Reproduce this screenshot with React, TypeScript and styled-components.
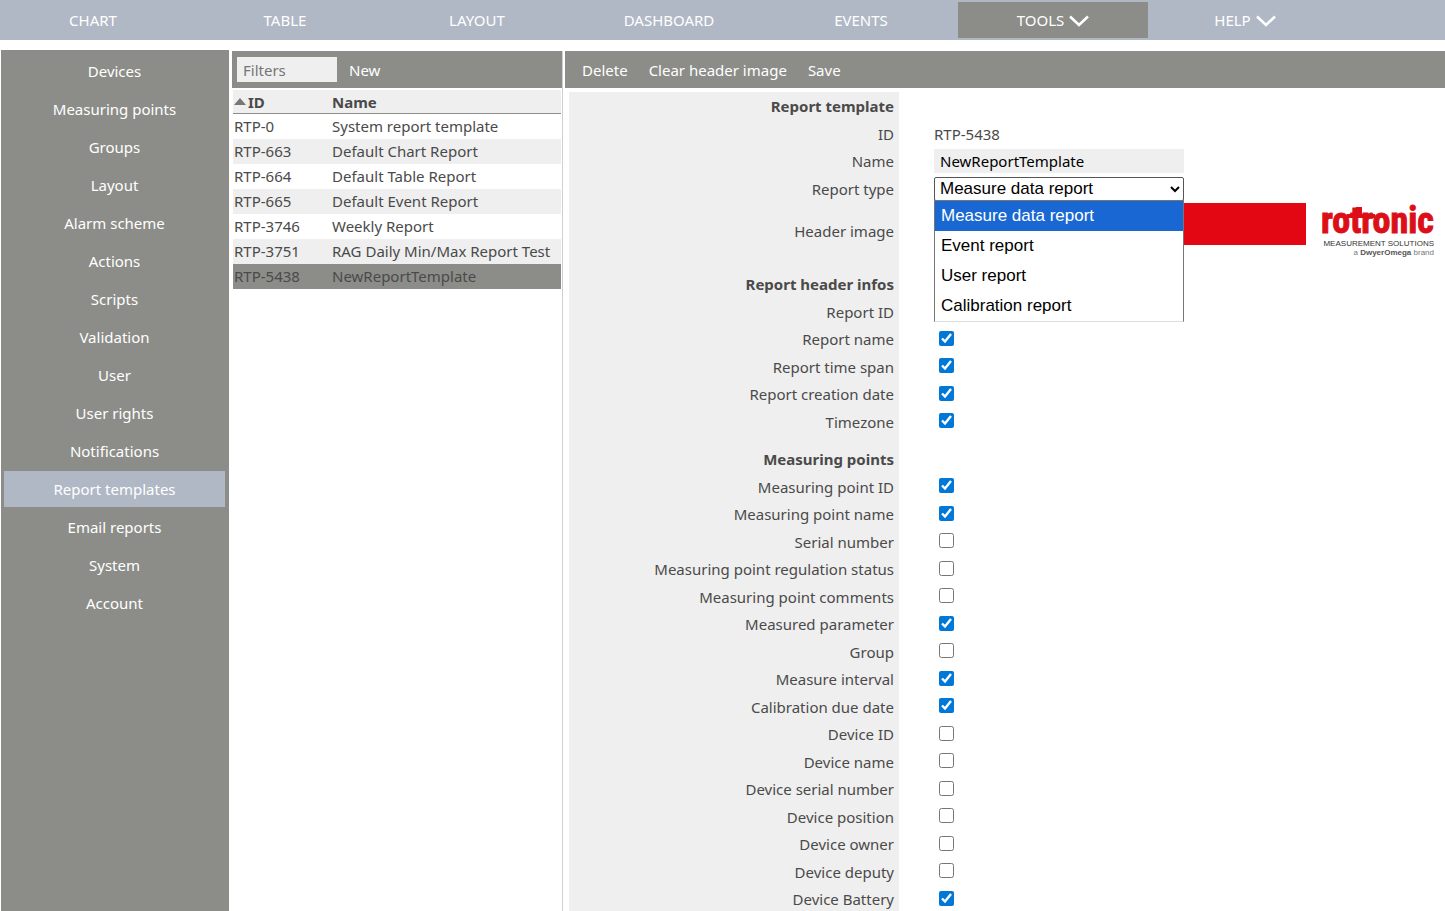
import React, { useState } from "react";
import styled, { createGlobalStyle, css } from "styled-components";

const color = {
  bar: "#b0b8c5",
  panel: "#8c8d88",
  stripe: "#efefef",
  text: "#4a4a4a",
  highlight: "#1967d2",
  check: "#0078d7",
  red: "#e30613",
  logo: "#dc0f19",
};

const GlobalStyle = createGlobalStyle`
  *, *::before, *::after { box-sizing: border-box; }
  body {
    margin: 0;
    background: #fff;
    color: ${color.text};
    font: 15px/20px "Noto Sans", "Open Sans", sans-serif;
  }
  input, button, select { font: inherit; margin: 0; }
`;

const Page = styled.div`
  display: flex;
  flex-direction: column;
  height: 100vh;
  overflow: hidden;
`;

const TopNav = styled.nav`
  display: flex;
  flex: none;
  gap: 2px;
  height: 40px;
  padding: 2px 0;
  margin-left: -2px;
  background: ${color.bar};
`;

const TopLink = styled.a<{ $active?: boolean }>`
  display: flex;
  flex: 0 1 190px;
  align-items: center;
  justify-content: center;
  gap: 5px;
  color: #fff;
  text-decoration: none;
  background: ${(p) => (p.$active ? color.panel : "transparent")};
`;

const Body = styled.div`
  display: flex;
  flex: 1;
  min-height: 0;
  padding: 10px 0 0 1px;
`;

const Sidebar = styled.nav`
  display: flex;
  flex: 0 0 228px;
  flex-direction: column;
  gap: 2px;
  padding: 3px 4px 0 3px;
  background: ${color.panel};
`;

const SideLink = styled.a<{ $active?: boolean }>`
  display: flex;
  flex: none;
  height: 36px;
  align-items: center;
  justify-content: center;
  color: #fff;
  text-decoration: none;
  background: ${(p) => (p.$active ? color.bar : "transparent")};
`;

const ListPanel = styled.section`
  flex: 0 0 331px;
  margin: 1px 2px 0 3px;
  border-right: 1px solid #ccd2d2;
`;

const DetailPanel = styled.section`
  flex: 1;
  min-width: 0;
  margin-top: 1px;
  overflow: hidden;
`;

const Toolbar = styled.div<{ $wide?: boolean }>`
  display: flex;
  align-items: center;
  height: 37px;
  gap: ${(p) => (p.$wide ? 21 : 12)}px;
  padding-left: ${(p) => (p.$wide ? 17 : 5)}px;
  background: ${color.panel};
`;

const ToolButton = styled.button`
  padding: 0;
  border: 0;
  background: none;
  color: #fff;
  cursor: pointer;
`;

const field = css`
  border: 0;
  border-radius: 0;
  background: ${color.stripe};
  padding: 0 6px;
`;

const FilterInput = styled.input`
  ${field}
  width: 100px;
  height: 25px;
  &::placeholder { color: #757575; }
`;

const Table = styled.table`
  width: 328px;
  margin: 2px 0 0 1px;
  border-collapse: separate;
  border-spacing: 0;
  table-layout: fixed;
`;

const HeadCell = styled.th<{ $first?: boolean }>`
  width: ${(p) => (p.$first ? "98px" : "auto")};
  height: 24px;
  padding: 0 0 0 1px;
  border-bottom: 1px solid ${color.panel};
  background: ${color.stripe};
  text-align: left;
  white-space: nowrap;
`;

const SortMark = styled.svg`
  width: 12px;
  height: 7px;
  margin-right: 2px;
  vertical-align: 3px;
`;

const Row = styled.tr<{ $selected?: boolean }>`
  height: 25px;
  background: #fff;
  &:nth-child(even) { background: ${color.stripe}; }
  ${(p) => p.$selected && css`&& { background: ${color.panel}; }`}
`;

const Cell = styled.td`
  padding: 0 0 2px 1px;
  white-space: nowrap;
`;

const Form = styled.form`
  padding: 4px 0 0 4px;
`;

const Label = styled.label`
  display: flex;
  align-items: center;
  justify-content: flex-end;
  padding-right: 5px;
  background: ${color.stripe};
`;

const Title = styled(Label).attrs({ as: "h2" })`
  margin: 0;
  font-size: 15px;
  line-height: 20px;
`;

const Group = styled.div`
  & + & ${Title} { padding-top: 10px; }
  & + & > :first-child { grid-auto-rows: 38px; }
`;

const FormRow = styled.div<{ $tall?: boolean }>`
  display: grid;
  grid-template-columns: 330px 1fr;
  grid-auto-rows: 27px;
  &:nth-child(odd) { grid-auto-rows: ${(p) => (p.$tall ? 58 : 28)}px; }
`;

const Value = styled.div`
  display: flex;
  align-items: center;
  position: relative;
  padding-left: 35px;
`;

const CheckValue = styled(Value)`
  padding: 0 0 2px 40px;
`;

const Check = styled.input.attrs({ type: "checkbox" })`
  width: 15px;
  height: 15px;
  accent-color: ${color.check};
`;

const NameInput = styled.input`
  ${field}
  width: 250px;
  height: 24px;
  color: #000;
`;

const TypeSelect = styled.select`
  width: 250px;
  height: 24px;
  padding: 0 1px;
  border: 1px solid #555;
  border-radius: 2px;
  background: #fff;
  color: #000;
  font: 17px/20px "Liberation Sans", Arial, sans-serif;
`;

const Menu = styled.ul`
  position: absolute;
  z-index: 1;
  top: 25px;
  left: 35px;
  width: 250px;
  margin: 0;
  padding: 0;
  list-style: none;
  border: 1px solid #767676;
  border-bottom-color: #ddd;
  background: #fff;
  color: #000;
  font: 17px/30px "Liberation Sans", Arial, sans-serif;
`;

const MenuItem = styled.li<{ $active?: boolean }>`
  padding-left: 6px;
  color: ${(p) => (p.$active ? "#fff" : "#000")};
  background: ${(p) => (p.$active ? color.highlight : "transparent")};
`;

const Banner = styled.svg`
  flex: none;
  width: 502px;
  height: 58px;
  overflow: visible;
`;

const Chevron = () => (
  <svg width="20" height="13" viewBox="0 0 20 13" aria-hidden="true">
    <path d="M1 2.500 L10 11 L19 2.500" fill="none" stroke="#fff" strokeWidth="2.600" />
  </svg>
);

const HeaderBanner = () => (
  <Banner viewBox="0 0 502 58" role="img" aria-label="Header image">
    <rect x="0" y="1" width="372" height="42" fill={color.red} />
    <text
      x="387"
      y="31"
      fontFamily='"Roboto Condensed", "Liberation Sans", Arial, sans-serif'
      fontSize="36"
      fontWeight="700"
      fill={color.logo}
      stroke={color.logo}
    >
      rotronic
    </text>
    <path d="M413 12h28v4h-28z M422 5h6v10h-6z" fill={color.logo} />
    <g fontFamily='"Liberation Sans", Arial, sans-serif' textAnchor="end">
      <text x="500" y="44" fontSize="8" fill="#333">MEASUREMENT SOLUTIONS</text>
      <text x="500" y="53" fontSize="8" fill="#777">
        a <tspan fontWeight="700" fill="#555">DwyerOmega</tspan> brand
      </text>
    </g>
  </Banner>
);

const topItems = ["CHART", "TABLE", "LAYOUT", "DASHBOARD", "EVENTS", "TOOLS", "HELP"];

const sideItems = [
  "Devices", "Measuring points", "Groups", "Layout", "Alarm scheme", "Actions", "Scripts",
  "Validation", "User", "User rights", "Notifications", "Report templates", "Email reports",
  "System", "Account",
];

const templates = [
  ["RTP-0", "System report template"],
  ["RTP-663", "Default Chart Report"],
  ["RTP-664", "Default Table Report"],
  ["RTP-665", "Default Event Report"],
  ["RTP-3746", "Weekly Report"],
  ["RTP-3751", "RAG Daily Min/Max Report Test"],
  ["RTP-5438", "NewReportTemplate"],
];

const reportTypes = ["Measure data report", "Event report", "User report", "Calibration report"];

const headerInfos: [string, boolean][] = [
  ["Report ID", true],
  ["Report name", true],
  ["Report time span", true],
  ["Report creation date", true],
  ["Timezone", true],
];

const pointInfos: [string, boolean][] = [
  ["Measuring point ID", true],
  ["Measuring point name", true],
  ["Serial number", false],
  ["Measuring point regulation status", false],
  ["Measuring point comments", false],
  ["Measured parameter", true],
  ["Group", false],
  ["Measure interval", true],
  ["Calibration due date", true],
  ["Device ID", false],
  ["Device name", false],
  ["Device serial number", false],
  ["Device position", false],
  ["Device owner", false],
  ["Device deputy", false],
  ["Device Battery", true],
];

const slug = (s: string) => s.toLowerCase().replace(/ /g, "-");

const CheckGroup = ({ title, items }: { title: string; items: [string, boolean][] }) => (
  <Group>
    <FormRow>
      <Title>{title}</Title>
    </FormRow>
    {items.map(([name, checked]) => (
      <FormRow key={name}>
        <Label htmlFor={slug(name)}>{name}</Label>
        <CheckValue>
          <Check id={slug(name)} defaultChecked={checked} />
        </CheckValue>
      </FormRow>
    ))}
  </Group>
);

export default function App() {
  const [type, setType] = useState(reportTypes[0]);
  return (
    <Page>
      <GlobalStyle />
      <TopNav>
        {topItems.map((item) => (
          <TopLink key={item} href="#" $active={item === "TOOLS"}>
            {item}
            {(item === "TOOLS" || item === "HELP") && <Chevron />}
          </TopLink>
        ))}
      </TopNav>
      <Body>
        <Sidebar>
          {sideItems.map((item) => (
            <SideLink key={item} href="#" $active={item === "Report templates"}>
              {item}
            </SideLink>
          ))}
        </Sidebar>
        <ListPanel>
          <Toolbar>
            <FilterInput placeholder="Filters" aria-label="Filters" />
            <ToolButton type="button">New</ToolButton>
          </Toolbar>
          <Table>
            <thead>
              <tr>
                <HeadCell $first>
                  <SortMark viewBox="0 0 12 7" aria-hidden="true">
                    <path d="M0 7 L6 0 L12 7 Z" fill="#777" />
                  </SortMark>
                  ID
                </HeadCell>
                <HeadCell>Name</HeadCell>
              </tr>
            </thead>
            <tbody>
              {templates.map(([id, name]) => (
                <Row key={id} $selected={id === "RTP-5438"}>
                  <Cell>{id}</Cell>
                  <Cell>{name}</Cell>
                </Row>
              ))}
            </tbody>
          </Table>
        </ListPanel>
        <DetailPanel>
          <Toolbar $wide>
            <ToolButton type="button">Delete</ToolButton>
            <ToolButton type="button">Clear header image</ToolButton>
            <ToolButton type="button">Save</ToolButton>
          </Toolbar>
          <Form>
            <Group>
              <FormRow>
                <Title>Report template</Title>
              </FormRow>
              <FormRow>
                <Label as="span">ID</Label>
                <Value>RTP-5438</Value>
              </FormRow>
              <FormRow>
                <Label htmlFor="name">Name</Label>
                <Value>
                  <NameInput id="name" defaultValue="NewReportTemplate" />
                </Value>
              </FormRow>
              <FormRow>
                <Label htmlFor="type">Report type</Label>
                <Value>
                  <TypeSelect id="type" value={type} onChange={(e) => setType(e.target.value)}>
                    {reportTypes.map((t) => (
                      <option key={t}>{t}</option>
                    ))}
                  </TypeSelect>
                  <Menu role="listbox" aria-label="Report type">
                    {reportTypes.map((t) => (
                      <MenuItem
                        key={t}
                        role="option"
                        aria-selected={t === type}
                        $active={t === type}
                        onClick={() => setType(t)}
                      >
                        {t}
                      </MenuItem>
                    ))}
                  </Menu>
                </Value>
              </FormRow>
              <FormRow $tall>
                <Label as="span">Header image</Label>
                <Value>
                  <HeaderBanner />
                </Value>
              </FormRow>
            </Group>
            <CheckGroup title="Report header infos" items={headerInfos} />
            <CheckGroup title="Measuring points" items={pointInfos} />
          </Form>
        </DetailPanel>
      </Body>
    </Page>
  );
}
